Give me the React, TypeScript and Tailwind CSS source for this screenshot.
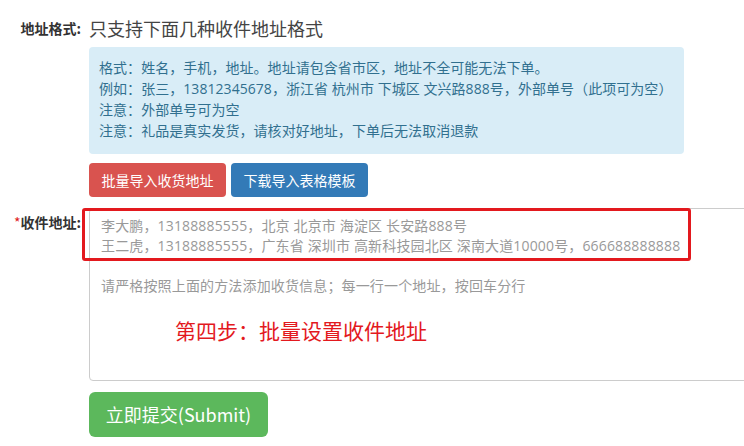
import React from "react";

const mix = { fontFamily: '"Open Sans", "Noto Sans CJK SC", sans-serif' };

export default function App() {
  return (
    <div
      className="relative w-[744px] h-[446px] overflow-hidden bg-white text-[14px] text-[#333]"
      style={{ fontFamily: '"Noto Sans CJK SC", "Noto Sans", sans-serif' }}
    >
      <div className="pt-[18px]">
        {/* Row 1 */}
        <div className="flex">
          <div className="w-[89px] shrink-0 pr-[8px] text-right font-bold leading-[20px] text-[14px]">
            地址格式:
          </div>
          <div className="flex-1">
            <div className="text-[18px] leading-[20px] text-[#444]">只支持下面几种收件地址格式</div>
            <div
              className="mt-[9px] w-[595px] rounded-[4px] bg-[#d9edf7] pl-[10px] pt-[10px] pb-[13px] text-[14px] leading-[21px] tracking-[0.05px] text-[#31708f]"
              style={mix}
            >
              <div>格式：姓名，手机，地址。地址请包含省市区，地址不全可能无法下单。</div>
              <div>例如：张三，13812345678，浙江省 杭州市 下城区 文兴路888号，外部单号（此项可为空）</div>
              <div>注意：外部单号可为空</div>
              <div>注意：礼品是真实发货，请核对好地址，下单后无法取消退款</div>
            </div>
            <div className="mt-[9px] flex gap-[5px]">
              <div className="flex h-[34px] w-[137px] items-center justify-center rounded-[4px] bg-[#d9534f] text-[14px] text-white">
                批量导入收货地址
              </div>
              <div className="flex h-[34px] w-[137px] items-center justify-center rounded-[4px] bg-[#337ab7] text-[14px] text-white">
                下载导入表格模板
              </div>
            </div>
          </div>
        </div>

        {/* Row 2 */}
        <div className="mt-[11px] flex">
          <div className="w-[89px] shrink-0 pr-[8px] pt-[4px] text-right font-bold leading-[20px] text-[14px]">
            <span className="text-[#e02020] font-normal">*</span>收件地址:
          </div>
          <div className="flex-1">
            <div
              className="h-[173px] w-[700px] rounded-l-[4px] border border-[#ccc] px-[11px] pt-[7px] text-[14px] leading-[20px] tracking-[0.15px] text-[#999]"
              style={mix}
            >
              <div>李大鹏，13188885555，北京 北京市 海淀区 长安路888号</div>
              <div>王二虎，13188885555，广东省 深圳市 高新科技园北区 深南大道10000号，666688888888</div>
              <div>&nbsp;</div>
              <div>请严格按照上面的方法添加收货信息；每一行一个地址，按回车分行</div>
            </div>
            <button className="mt-[11px] flex h-[45px] w-[179px] items-center justify-center rounded-[6px] bg-[#5cb85c] text-[18px] text-white">
              立即提交(Submit)
            </button>
          </div>
        </div>
      </div>

      {/* annotation overlays */}
      <div className="absolute left-[82px] top-[208px] h-[53px] w-[609px] rounded-[3px] border-[3px] border-[#e3191e]" />
      <div className="absolute left-[175px] top-[316px] text-[21px] leading-[28px] text-[#e3191e]">
        第四步：批量设置收件地址
      </div>
    </div>
  );
}
